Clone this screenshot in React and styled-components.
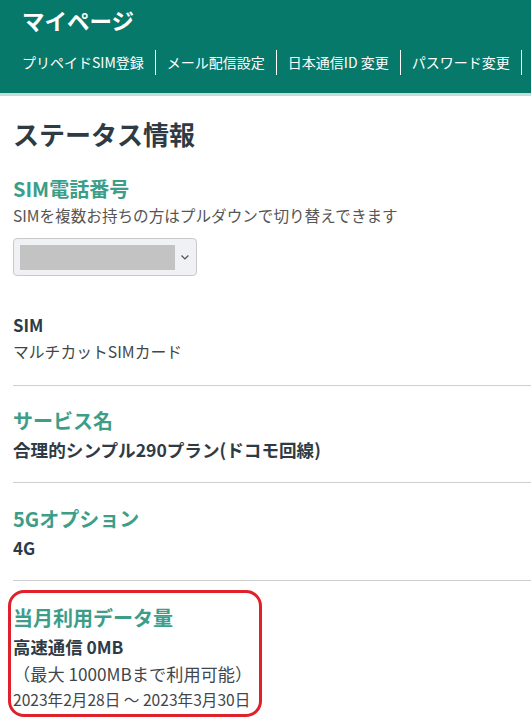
import React from 'react';
import styled, { createGlobalStyle } from 'styled-components';

const GlobalStyle = createGlobalStyle`
  html, body {
    margin: 0;
    padding: 0;
    background: #fff;
  }
  body {
    font-family: "Noto Sans CJK JP", "Noto Sans", sans-serif;
    color: #333d45;
  }
`;

const Header = styled.header`
  background: #07796a;
  padding: 5px 0 18px 22px;
  border-bottom: 3px solid #c5dcd8;
  overflow: hidden;
`;

const SiteTitle = styled.h1`
  margin: 0;
  color: #fff;
  font-size: 22.5px;
  line-height: 30px;
  font-weight: 700;
`;

const Nav = styled.nav`
  display: flex;
  margin-top: 15px;
  white-space: nowrap;
`;

const NavItem = styled.a`
  display: block;
  color: #fff;
  font-size: 14px;
  line-height: 25px;
  padding: 0 11px;
  border-right: 1px solid #fff;
  text-decoration: none;
  &:first-child {
    padding-left: 0;
  }
`;

const Main = styled.main`
  padding: 0 0 0 13px;
`;

const PageTitle = styled.h2`
  margin: 0;
  padding-top: 20px;
  font-size: 26px;
  line-height: 36px;
  font-weight: 700;
  color: #2f3b44;
`;

const Section = styled.section`
  padding: ${p => p.$pad || '22px 0 17px'};
  border-bottom: ${p => (p.$noLine ? 'none' : '1px solid #cfcfcf')};
`;

const Heading = styled.h3`
  margin: 0;
  font-size: 20px;
  line-height: 28px;
  font-weight: 700;
  color: #3c9e88;
`;

const Note = styled.p`
  margin: 0;
  font-size: 15.6px;
  line-height: 24px;
  color: #555;
`;

const Label = styled.div`
  font-size: 16.8px;
  line-height: 28px;
  font-weight: 700;
  color: #2f3b44;
`;

const Value = styled.div`
  font-size: ${p => p.$size || '15.8px'};
  line-height: ${p => p.$lh || '26px'};
  font-weight: ${p => (p.$bold ? 700 : 400)};
  color: ${p => (p.$bold ? '#2f3b44' : '#3f474d')};
  white-space: nowrap;
`;

const SelectBox = styled.div`
  display: flex;
  align-items: center;
  box-sizing: border-box;
  width: 184px;
  height: 38px;
  margin-top: 11px;
  padding: 0 6px;
  background: #f0f1f4;
  border: 1px solid #c9c9c9;
  border-radius: 4px;
`;

const Masked = styled.div`
  width: 158px;
  height: 25px;
  background: #c3c3c3;
`;

const Chevron = styled.svg`
  margin-left: 5px;
`;

const Highlight = styled.div`
  box-sizing: border-box;
  width: 254px;
  margin-left: -5px;
  padding: 11px 0 3px 2px;
  border: 3px solid #e0202a;
  border-radius: 16px;
`;

export default function App() {
  return (
    <>
      <GlobalStyle />
      <Header>
        <SiteTitle>マイページ</SiteTitle>
        <Nav>
          <NavItem>プリペイドSIM登録</NavItem>
          <NavItem>メール配信設定</NavItem>
          <NavItem>日本通信ID 変更</NavItem>
          <NavItem>パスワード変更</NavItem>
        </Nav>
      </Header>
      <Main>
        <PageTitle>ステータス情報</PageTitle>
        <Section $noLine $pad="23px 0 0">
          <Heading>SIM電話番号</Heading>
          <Note>SIMを複数お持ちの方はプルダウンで切り替えできます</Note>
          <SelectBox>
            <Masked />
            <Chevron width="10" height="8" viewBox="0 0 10 8">
              <path d="M1.5 2.5 L5 6 L8.5 2.5" fill="none" stroke="#555" strokeWidth="1.3" />
            </Chevron>
          </SelectBox>
        </Section>
        <Section $pad="35px 0 20px">
          <Label>SIM</Label>
          <Value>マルチカットSIMカード</Value>
        </Section>
        <Section $pad="21px 0 17px">
          <Heading>サービス名</Heading>
          <Value $bold $size="17.6px" $lh="30px">合理的シンプル290プラン(ドコモ回線)</Value>
        </Section>
        <Section>
          <Heading>5Gオプション</Heading>
          <Value $bold $size="17px" $lh="30px">4G</Value>
        </Section>
        <Section $noLine $pad="9px 0 0">
          <Highlight>
            <Heading>当月利用データ量</Heading>
            <Value $bold $size="17.4px" $lh="29px">高速通信 0MB</Value>
            <Value $size="17.2px" $lh="26px">（最大 1000MBまで利用可能）</Value>
            <Value $size="15.6px" $lh="24px">2023年2月28日 ～ 2023年3月30日</Value>
          </Highlight>
        </Section>
      </Main>
    </>
  );
}
